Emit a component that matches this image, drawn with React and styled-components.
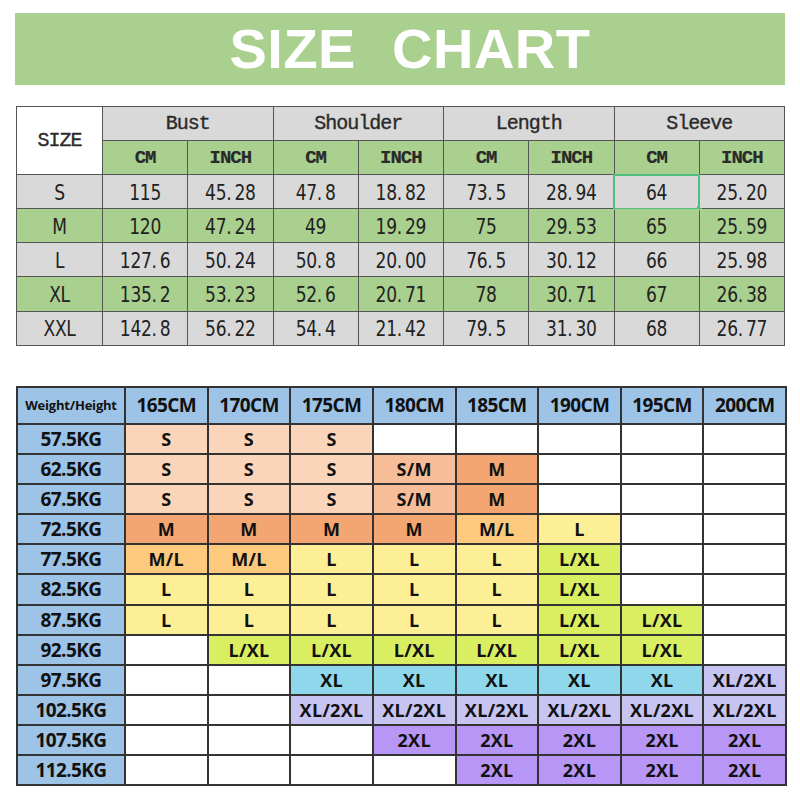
import React from "react";
import styled, { createGlobalStyle } from "styled-components";

const GlobalStyle = createGlobalStyle`
  html, body {
    margin: 0;
    padding: 0;
    background: #ffffff;
  }
`;

const Page = styled.div`
  width: 800px;
  height: 800px;
  padding: 13px 13px 0 15px;
  box-sizing: border-box;
  background: #ffffff;
  display: flex;
  flex-direction: column;
`;

const Banner = styled.div`
  height: 72px;
  width: 770px;
  background: #a9d08e;
  display: flex;
  align-items: center;
  justify-content: center;
  h1 {
    margin: 0 0 0 20px;
    color: #ffffff;
    font-family: "Liberation Sans", Arial, sans-serif;
    font-weight: 700;
    font-size: 56px;
    letter-spacing: 0.5px;
    word-spacing: 20px;
    line-height: 1;
  }
`;

const MeasureTable = styled.table`
  margin-top: 21px;
  margin-left: 1px;
  width: 769px;
  border-collapse: collapse;
  table-layout: fixed;
  border: 1.5px solid #555;

  td {
    border: 1.5px solid #555;
    text-align: center;
    padding: 0;
    height: 33.1px;
    color: #222;
  }
`;

const HeadCell = styled.td`
  && {
    background: ${(p) => p.bg};
    font-family: "Liberation Mono", "Courier New", monospace;
    font-size: ${(p) => (p.bold ? "19px" : "20px")};
    font-weight: ${(p) => (p.bold ? 700 : 400)};
    letter-spacing: -1px;
    color: #2a2a2a;
    -webkit-text-stroke: ${(p) => (p.bold ? "0.2px" : "0.35px")} #2a2a2a;
  }
`;

const NumCell = styled.td`
  && {
    position: relative;
    background: ${(p) => (p.green ? "#a9d08e" : "#d9d9d9")};
    font-family: "DejaVu Sans Condensed", "DejaVu Sans", sans-serif;
    font-stretch: condensed;
    font-size: 19px;
    ${(p) => p.selected && `outline: 2px solid #4fbf82; outline-offset: -1px;`}
  }
`;

const Num = styled.span`
  display: inline-block;
  letter-spacing: -0.3px;
  transform: scaleY(1.1);
`;

const Handle = styled.span`
  position: absolute;
  right: -3px;
  bottom: -3px;
  width: 5px;
  height: 5px;
  background: #4fbf82;
`;

const FitTable = styled.table`
  margin-top: 40px;
  margin-left: 1px;
  width: 771px;
  border-collapse: collapse;
  table-layout: fixed;
  border: 2px solid #444;

  td {
    border: 2px solid #333;
    text-align: center;
    padding: 0;
    height: 28.15px;
    font-family: "Open Sans", "DejaVu Sans", sans-serif;
    font-weight: 700;
    color: #111;
  }
`;

const BlueCell = styled.td`
  && {
    background: #9dc3e6;
    font-size: ${(p) => (p.small ? "13px" : "19px")};
    height: ${(p) => (p.tall ? "35px" : "28.15px")};
    letter-spacing: ${(p) => (p.small ? "-0.2px" : "-0.6px")};
  }
`;

const SizeCell = styled.td`
  && {
    background: ${(p) => p.bg};
    font-size: 18px;
    letter-spacing: 0.3px;
  }
`;

const fitColors = {
  S: "#fbd5b9",
  "S/M": "#f7bd98",
  M: "#f4a672",
  "M/L": "#fcc97d",
  L: "#fdef96",
  "L/XL": "#daee62",
  XL: "#8fd7ea",
  "XL/2XL": "#c7c4f2",
  "2XL": "#b896f5",
  "": "#ffffff",
};

const measures = [
  ["S", "115", "45.28", "47.8", "18.82", "73.5", "28.94", "64", "25.20"],
  ["M", "120", "47.24", "49", "19.29", "75", "29.53", "65", "25.59"],
  ["L", "127.6", "50.24", "50.8", "20.00", "76.5", "30.12", "66", "25.98"],
  ["XL", "135.2", "53.23", "52.6", "20.71", "78", "30.71", "67", "26.38"],
  ["XXL", "142.8", "56.22", "54.4", "21.42", "79.5", "31.30", "68", "26.77"],
];

const heights = ["165CM", "170CM", "175CM", "180CM", "185CM", "190CM", "195CM", "200CM"];

const fits = [
  ["57.5KG", ["S", "S", "S", "", "", "", "", ""]],
  ["62.5KG", ["S", "S", "S", "S/M", "M", "", "", ""]],
  ["67.5KG", ["S", "S", "S", "S/M", "M", "", "", ""]],
  ["72.5KG", ["M", "M", "M", "M", "M/L", "L", "", ""]],
  ["77.5KG", ["M/L", "M/L", "L", "L", "L", "L/XL", "", ""]],
  ["82.5KG", ["L", "L", "L", "L", "L", "L/XL", "", ""]],
  ["87.5KG", ["L", "L", "L", "L", "L", "L/XL", "L/XL", ""]],
  ["92.5KG", ["", "L/XL", "L/XL", "L/XL", "L/XL", "L/XL", "L/XL", ""]],
  ["97.5KG", ["", "", "XL", "XL", "XL", "XL", "XL", "XL/2XL"]],
  ["102.5KG", ["", "", "XL/2XL", "XL/2XL", "XL/2XL", "XL/2XL", "XL/2XL", "XL/2XL"]],
  ["107.5KG", ["", "", "", "2XL", "2XL", "2XL", "2XL", "2XL"]],
  ["112.5KG", ["", "", "", "", "2XL", "2XL", "2XL", "2XL"]],
];

const spaced = (v) => v.replace(".", ".\u2009");

export default function App() {
  return (
    <Page>
      <GlobalStyle />
      <Banner>
        <h1>SIZE CHART</h1>
      </Banner>

      <MeasureTable>
        <colgroup>
          <col style={{ width: 86 }} />
          {Array.from({ length: 8 }).map((_, i) => (
            <col key={i} />
          ))}
        </colgroup>
        <tbody>
          <tr>
            <HeadCell rowSpan={2} bg="#ffffff">SIZE</HeadCell>
            {["Bust", "Shoulder", "Length", "Sleeve"].map((h) => (
              <HeadCell key={h} colSpan={2} bg="#d9d9d9">{h}</HeadCell>
            ))}
          </tr>
          <tr>
            {Array.from({ length: 4 }).flatMap((_, i) => [
              <HeadCell key={"c" + i} bg="#a9d08e" bold>CM</HeadCell>,
              <HeadCell key={"i" + i} bg="#a9d08e" bold>INCH</HeadCell>,
            ])}
          </tr>
          {measures.map((row, r) => (
            <tr key={row[0]}>
              {row.map((v, c) => (
                <NumCell key={c} green={r % 2 === 1} selected={r === 0 && c === 7}>
                  <Num>{c === 0 ? v : spaced(v)}</Num>
                  {r === 0 && c === 7 && <Handle />}
                </NumCell>
              ))}
            </tr>
          ))}
        </tbody>
      </MeasureTable>

      <FitTable>
        <colgroup>
          <col style={{ width: 108 }} />
          {heights.map((h) => (
            <col key={h} />
          ))}
        </colgroup>
        <tbody>
          <tr>
            <BlueCell small tall>Weight/Height</BlueCell>
            {heights.map((h) => (
              <BlueCell key={h} tall>{h}</BlueCell>
            ))}
          </tr>
          {fits.map(([w, sizes]) => (
            <tr key={w}>
              <BlueCell>{w}</BlueCell>
              {sizes.map((s, i) => (
                <SizeCell key={i} bg={fitColors[s]}>{s}</SizeCell>
              ))}
            </tr>
          ))}
        </tbody>
      </FitTable>
    </Page>
  );
}
